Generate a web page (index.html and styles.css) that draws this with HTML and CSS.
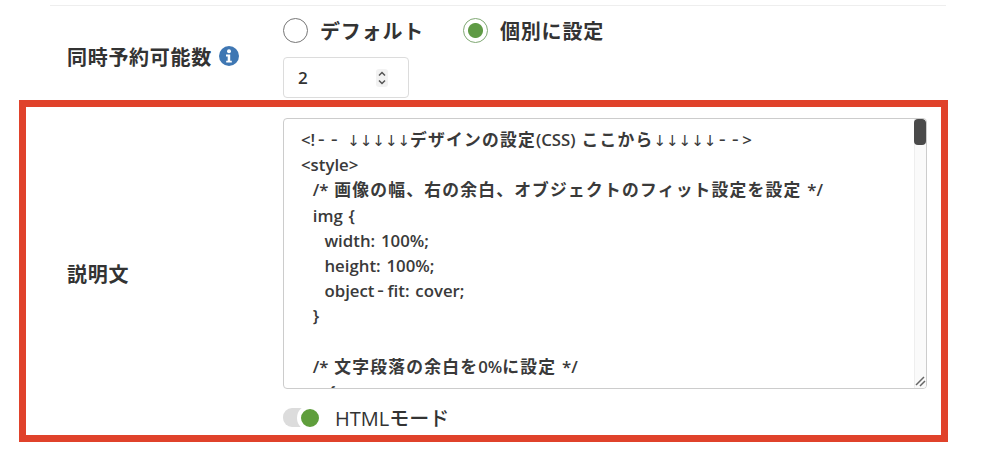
FILE: index.html
```html
<!DOCTYPE html>
<html lang="ja">
<head>
<meta charset="utf-8">
<title>設定</title>
<link rel="stylesheet" href="styles.css">
</head>
<body>
<main class="page">
  <hr class="rule">
  <section class="row row-top">
    <div class="label label-top"><span>同時予約可能数</span>
      <svg class="info" viewBox="0 0 20 20" width="20" height="20" aria-hidden="true"><circle cx="10" cy="10" r="10" fill="#3f77b3"/><circle cx="10" cy="5.2" r="2" fill="#fff"/><path d="M7 8.5h4.2v6.2h1.6v1.9H7.2v-1.9h1.5v-4.3H7z" fill="#fff"/></svg>
    </div>
    <div class="field">
      <div class="radios">
        <span class="radio"><i class="dot"></i>デフォルト</span>
        <span class="radio"><i class="dot on"></i>個別に設定</span>
      </div>
      <div class="number"><span>2</span>
        <svg class="spin" viewBox="0 0 14 20" width="14" height="20" aria-hidden="true"><rect x="1" y="1" width="12" height="18" rx="3" fill="#f2f2f2"/><path d="M4 7.5l3-3 3 3M4 12.5l3 3 3-3" fill="none" stroke="#555" stroke-width="1.5"/></svg>
      </div>
    </div>
  </section>
  <section class="row highlight">
    <div class="label">説明文</div>
    <div class="field field-main">
      <div class="textarea">
        <pre class="code">&lt;!<span class="dash">--</span> <span class="arr">↓↓↓↓↓</span><span class="ja">デザインの設定</span>(CSS) <span class="ja">ここから</span><span class="arr">↓↓↓↓↓</span><span class="dash">--</span>&gt;
&lt;style&gt;
  /* <span class="ja">画像の幅、右の余白、オブジェクトのフィット設定を設定</span> */
  img {
    width: 100%;
    height: 100%;
    object<span class="dash">-</span>fit: cover;
  }

  /* <span class="ja">文字段落の余白を</span>0%<span class="ja">に設定</span> */
  p {</pre>
        <div class="track"><div class="scrollbar"></div></div>
        <svg class="grip" viewBox="0 0 12 12" width="12" height="12" aria-hidden="true"><path d="M2 10L10 2M6 11l5-5" stroke="#666" stroke-width="1.5" fill="none"/></svg>
      </div>
      <div class="toggle-row">
        <span class="toggle"><i class="knob"></i></span>
        <span>HTMLモード</span>
      </div>
    </div>
  </section>
</main>
</body>
</html>
```
FILE: styles.css
```css
* { box-sizing: border-box; }
html, body { margin: 0; height: 100%; background: #fff; overflow: hidden; }
body {
  font-family: "Open Sans", "Noto Sans CJK JP", sans-serif;
  color: #333333;
}
.page { width: 992px; height: 454px; padding: 5px 0 0 19px; }
.rule { width: 896px; height: 1px; margin: 0 0 0 31px; border: 0; background: #eeeeee; }
.row { display: flex; width: 929px; }
.row-top { height: 94px; padding-left: 7px; }
.label {
  width: 257px;
  padding-left: 41px;
  font-size: 20px;
  letter-spacing: .7px;
  font-weight: 700;
  display: flex;
  align-items: center;
  gap: 7px;
}
.label-top { height: 100px; }
.info { flex: none; }
.field { display: flex; flex-direction: column; }
.radios { display: flex; gap: 39px; height: 51px; padding-top: 11px; }
.radio { display: flex; align-items: center; gap: 12px; font-size: 20px; letter-spacing: .8px; font-weight: 700; height: 26px; }
.dot { width: 25px; height: 25px; border: 1.5px solid #777; border-radius: 50%; background: #fff; display: block; }
.dot.on { border-color: #7fa873; background: radial-gradient(circle, #5f9a45 0 7px, #fff 8px); }
.number {
  width: 126px; height: 41px;
  border: 1px solid #dcdcdc;
  border-radius: 4px;
  display: flex; align-items: center; justify-content: space-between;
  padding: 0 19px 0 14px;
  font-size: 17px; font-weight: 600;
}
.highlight {
  height: 342px;
  border: 7px solid #e0422b;
  padding-top: 11px;
}
.highlight .label { height: 311px; }
.field-main { width: 644px; }
.textarea {
  position: relative;
  flex: none;
  width: 644px; height: 271px;
  border: 1px solid #cccccc;
  border-radius: 4px;
  overflow: hidden;
}
.code {
  margin: 0;
  padding: 8px 0 0 17px;
  font-family: "Open Sans", "Noto Sans CJK JP", sans-serif;
  font-size: 16.8px;
  font-weight: 600;
  word-spacing: 1.5px;
  line-height: 25.2px;
  color: #3a3a3a;
  height: 269px;
  overflow: hidden;
}
.ja { letter-spacing: 1.2px; }
.arr { font-family: "DejaVu Sans", sans-serif; font-size: 15px; font-weight: 400; line-height: 1; }
.dash { font-family: "DejaVu Sans Mono", monospace; font-size: 20px; font-weight: 400; letter-spacing: 1px; line-height: 1; }
.track {
  position: absolute; top: 0; right: 0; bottom: 0;
  width: 12px;
  background: #fafafa;
  border-left: 1px solid #eeeeee;
}
.scrollbar {
  width: 12px; height: 26px;
  margin-left: -1px;
  border-radius: 4px;
  background: #4a4a4a;
}
.grip { position: absolute; right: 0; bottom: 1px; }
.toggle-row { display: flex; align-items: center; gap: 25px; height: 36px; margin-top: 10px; font-size: 20px; font-weight: 500; }
.toggle { position: relative; flex: none; width: 27px; height: 19px; border-radius: 9px 0 0 9px; background: #dcdcdc; display: block; }
.knob { position: absolute; left: 14px; top: -3px; width: 26px; height: 26px; border-radius: 50%; background: #5f9e3c; border: 4px solid #fff; }
```
